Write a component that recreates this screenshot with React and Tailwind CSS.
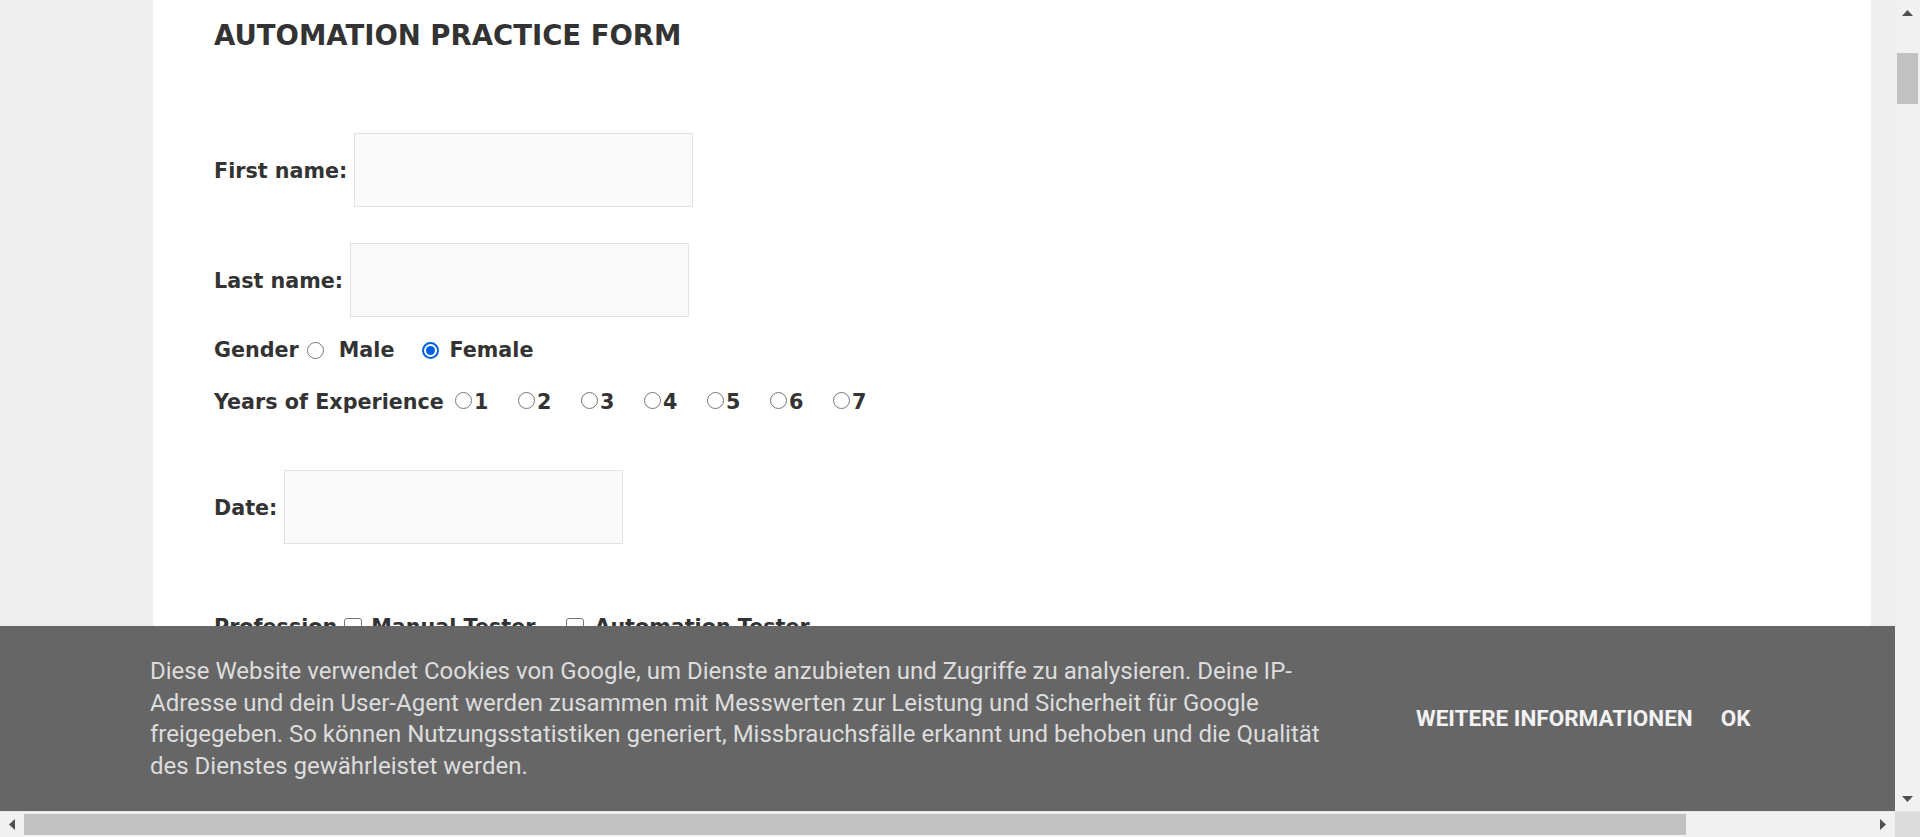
import React from "react";

const formFont = { fontFamily: '"DejaVu Sans", Verdana, sans-serif' };

function Radio({ checked }) {
  if (checked) {
    return (
      <span className="flex h-[17px] w-[17px] shrink-0 items-center justify-center rounded-full border-2 border-[#0060df] bg-white">
        <span className="h-[9px] w-[9px] rounded-full bg-[#0060df]" />
      </span>
    );
  }
  return <span className="block h-[17px] w-[17px] shrink-0 rounded-full border border-[#767676] bg-white" />;
}

function Checkbox() {
  return <span className="block h-[18px] w-[18px] shrink-0 rounded-[3px] border border-[#767676] bg-white" />;
}

function TextBox() {
  return <div className="ml-[7px] h-[74px] w-[339px] shrink-0 border border-[#e2e2e2] bg-[#fafafa]" />;
}

function Arrow({ dir }) {
  const pts = {
    up: "0,6 5.5,0 11,6",
    down: "0,0 5.5,6 11,0",
    left: "6,0 0,5.5 6,11",
    right: "0,0 6,5.5 0,11",
  }[dir];
  const vertical = dir === "up" || dir === "down";
  return (
    <svg width={vertical ? 11 : 6} height={vertical ? 6 : 11} viewBox={vertical ? "0 0 11 6" : "0 0 6 11"}>
      <polygon points={pts} fill="#505050" />
    </svg>
  );
}

function CookieBar() {
  return (
    <div className="absolute bottom-0 left-0 right-0 flex h-[185px] bg-[#666666] pl-[150px]" style={{ fontFamily: "Roboto, sans-serif" }}>
      <p className="mt-[30px] w-[1190px] shrink-0 text-[24px] leading-[31.5px] text-[#dddddd]">
        Diese Website verwendet Cookies von Google, um Dienste anzubieten und Zugriffe zu analysieren. Deine IP-Adresse und dein User-Agent werden zusammen mit Messwerten zur Leistung und Sicherheit für Google freigegeben. So können Nutzungsstatistiken generiert, Missbrauchsfälle erkannt und behoben und die Qualität des Dienstes gewährleistet werden.
      </p>
      <div className="mb-[2px] ml-[76px] flex items-center self-center text-[22.5px] font-bold uppercase leading-[32px] text-[#f2f2f2]">
        <a href="#">Weitere Informationen</a>
        <a href="#" className="ml-[28px]">OK</a>
      </div>
    </div>
  );
}

export default function App() {
  const years = [1, 2, 3, 4, 5, 6, 7];

  return (
    <div className="flex h-[837px] w-[1920px] flex-col overflow-hidden bg-[#f1f1f1]">
      <div className="flex min-h-0 flex-1">
        <div className="relative flex flex-1 overflow-hidden bg-[#eeeeee]">
          <div className="w-[153px] shrink-0" />
          <main className="w-[1718px] shrink-0 bg-white pl-[61px] pt-[19px] text-[#333333]" style={formFont}>
            <h3 className="text-[27.5px] font-bold leading-[32px]">AUTOMATION PRACTICE FORM</h3>

            <div className="mt-[82px] flex items-center text-[20.7px] font-bold">
              <span className="pt-[4px]">First name:</span>
              <TextBox />
            </div>

            <div className="mt-[36px] flex items-center text-[20.7px] font-bold">
              <span className="pt-[4px]">Last name:</span>
              <TextBox />
            </div>

            <div className="mt-[21px] flex h-[24px] items-center text-[20.7px] font-bold leading-[24px]">
              <span>Gender</span>
              <span className="ml-[8px]"><Radio /></span>
              <span className="ml-[15px]">Male</span>
              <span className="ml-[28px]"><Radio checked /></span>
              <span className="ml-[10px]">Female</span>
            </div>

            <div className="mt-[28px] flex h-[24px] items-center text-[20.7px] font-bold leading-[24px]">
              <span className="mr-[11px]">Years of Experience</span>
              {years.map((y) => (
                <span key={y} className="flex w-[63px] items-center">
                  <span className="mb-[4px]"><Radio /></span>
                  <span className="ml-[2px]">{y}</span>
                </span>
              ))}
            </div>

            <div className="mt-[56px] flex items-center text-[20.7px] font-bold">
              <span className="pt-[4px]">Date:</span>
              <TextBox />
            </div>

            <div className="mt-[71px] flex h-[24px] items-center text-[20.7px] font-bold leading-[24px]">
              <span>Profession</span>
              <span className="ml-[7px]"><Checkbox /></span>
              <span className="ml-[9px]">Manual Tester</span>
              <span className="ml-[31px]"><Checkbox /></span>
              <span className="ml-[10px]">Automation Tester</span>
            </div>
          </main>
          <CookieBar />
        </div>

        <div className="flex w-[25px] shrink-0 flex-col items-center bg-[#f1f1f1]">
          <div className="flex h-[25px] items-center justify-center">
            <Arrow dir="up" />
          </div>
          <div className="mt-[28px] h-[51px] w-[21px] bg-[#c1c1c1]" />
          <div className="flex-1" />
          <div className="flex h-[25px] items-center justify-center">
            <Arrow dir="down" />
          </div>
        </div>
      </div>

      <div className="flex h-[26px] shrink-0 border-t border-[#e6e6e6]">
        <div className="flex flex-1 items-center bg-[#f1f1f1]">
          <div className="flex w-[24px] justify-center">
            <Arrow dir="left" />
          </div>
          <div className="h-[21px] w-[1662px] bg-[#c1c1c1]" />
          <div className="flex-1" />
          <div className="flex w-[25px] justify-center">
            <Arrow dir="right" />
          </div>
        </div>
        <div className="w-[25px] bg-[#dcdcdc]" />
      </div>
    </div>
  );
}
